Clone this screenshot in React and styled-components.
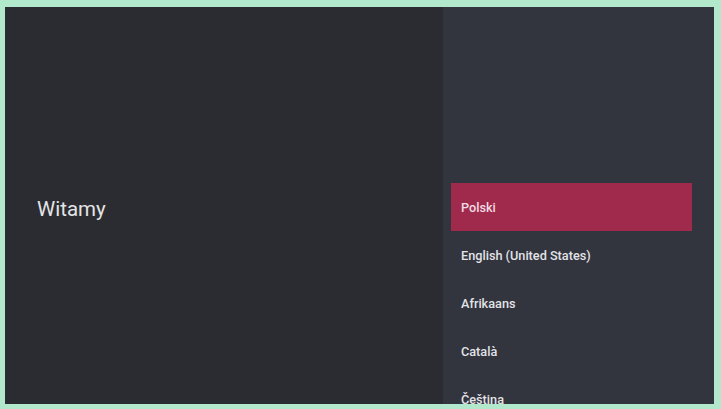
import React from 'react';
import styled, { createGlobalStyle } from 'styled-components';

const GlobalStyle = createGlobalStyle`
  html, body {
    margin: 0;
    padding: 0;
    background: #b2e9cd;
  }
  body {
    font-family: Roboto, "Noto Sans", "Liberation Sans", sans-serif;
  }
`;

const Frame = styled.div`
  width: 721px;
  height: 409px;
  box-sizing: border-box;
  padding: 7px 7px 5px 5px;
  background: #b2e9cd;
`;

const Screen = styled.div`
  display: flex;
  height: 100%;
  overflow: hidden;
  background: #2b2c31;
`;

const WelcomePane = styled.div`
  width: 438px;
  display: flex;
  align-items: center;
  padding-left: 32px;
  box-sizing: border-box;
  background: #2b2c31;
`;

const Title = styled.h1`
  margin: 0;
  font-size: 20.5px;
  font-weight: 400;
  color: #e4e4e6;
  transform: translateY(3px);
`;

const LanguagePane = styled.div`
  flex: 1;
  background: #32343e;
  padding: 176px 22px 0 8px;
  overflow: hidden;
`;

const LanguageList = styled.ul`
  list-style: none;
  margin: 0;
  padding: 0;
`;

const LanguageItem = styled.li`
  height: 48px;
  display: flex;
  align-items: center;
  padding-left: 10px;
  font-size: 12.7px;
  font-weight: 500;
  color: ${(p) => (p.$active ? '#f1dbe2' : '#e2e3e6')};
  background: ${(p) => (p.$active ? '#a02a4c' : 'transparent')};
  white-space: nowrap;
`;

const languages = ['Polski', 'English (United States)', 'Afrikaans', 'Català', 'Čeština'];

const App = () => (
  <>
    <GlobalStyle />
    <Frame>
      <Screen>
        <WelcomePane>
          <Title>Witamy</Title>
        </WelcomePane>
        <LanguagePane>
          <LanguageList>
            {languages.map((lang, i) => (
              <LanguageItem key={lang} $active={i === 0}>
                {lang}
              </LanguageItem>
            ))}
          </LanguageList>
        </LanguagePane>
      </Screen>
    </Frame>
  </>
);

export default App;
